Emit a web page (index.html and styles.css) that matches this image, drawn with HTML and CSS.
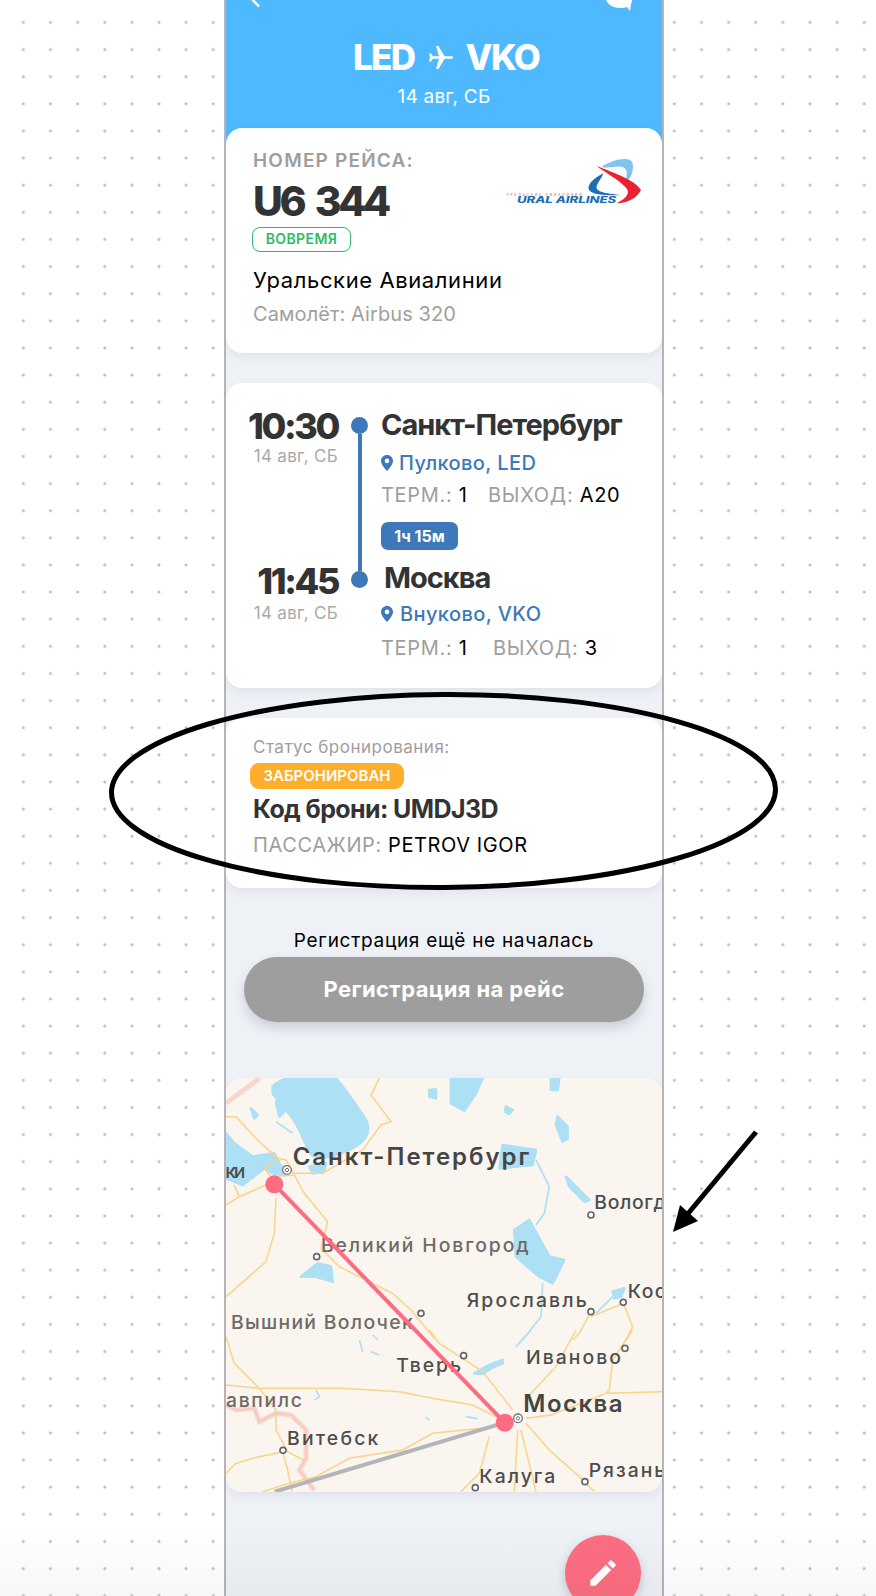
FILE: index.html
```html
<!DOCTYPE html>
<html lang="ru">
<head>
  <meta charset="UTF-8">
  <title>LED - VKO</title>
  <link rel="stylesheet" href="styles.css">
</head>
<body>
<div class="phone">
  <!-- шапка -->
  <div class="head">
    <div class="topbar">
      <svg class="back" width="10" height="8" viewBox="0 0 10 8"><path d="M0 -2L8 6.5" stroke="#fff" stroke-width="2.4" fill="none"/></svg>
      <svg class="chat" width="28" height="12" viewBox="0 0 28 12"><path d="M0 0C2 5 8 8 14 8C16 8 19 8 21 7L24 11L25 4C26 2 26 1 26 0Z" fill="#fff"/></svg>
    </div>
    <div class="route">
      <span>LED</span>
      <svg class="plane" width="25" height="23" viewBox="0 0 25 23"><path d="M25 11.5c0-.8-1-1.3-2-1.3h-6.5L10.5 0H8l3 10.2H5L3 7.5H1l1 4-1 4h2l2-2.7h6L8 23h2.5l6-10.2H23c1 0 2-.5 2-1.3z" fill="#fff"/></svg>
      <span>VKO</span>
    </div>
    <div class="route-date">14 авг, СБ</div>
  </div>

  <!-- рейс -->
  <div class="card flight">
    <div class="flight-info">
      <div class="flight-label">НОМЕР РЕЙСА:</div>
      <div class="flight-no">U6 344</div>
      <div class="on-time">ВОВРЕМЯ</div>
      <div class="airline">Уральские Авиалинии</div>
      <div class="aircraft">Самолёт: Airbus 320</div>
    </div>
    <svg class="logo" width="136" height="50" viewBox="50 15 408 150">
      <path d="M340 50C370 30 425 15 433 40C438 70 420 95 405 108C415 85 422 60 405 52C385 45 355 58 340 50Z" fill="#7fc4ea"/>
      <path d="M345 70C315 85 295 105 302 120C310 135 370 138 395 135C350 130 320 125 325 108C330 95 340 85 345 70Z" fill="#1f6db5"/>
      <path d="M325 48C380 70 440 90 458 120C445 145 420 158 385 160C415 145 428 128 412 112C390 88 350 68 325 48Z" fill="#e8222e"/>
      <text class="logo-ru" x="55" y="137" textLength="225">УРАЛЬСКИЕ АВИАЛИНИИ</text>
      <text class="logo-en" x="86" y="160" textLength="298" lengthAdjust="spacingAndGlyphs">URAL AIRLINES</text>
    </svg>
  </div>

  <!-- маршрут -->
  <div class="card legs">
    <div class="time-a">
      <div class="time">10:30</div>
      <div class="time-date">14 авг, СБ</div>
    </div>
    <div class="rail"><i class="dot"></i><i class="rail-line"></i><i class="dot"></i></div>
    <div class="stop-a">
      <div class="city">Санкт-Петербург</div>
      <div class="airport">
        <svg class="pin" width="12" height="16" viewBox="0 0 12 16"><path d="M6 0C2.7 0 0 2.6 0 5.9C0 10 6 16 6 16S12 10 12 5.9C12 2.6 9.3 0 6 0ZM6 8.2A2.3 2.3 0 1 1 6 3.6A2.3 2.3 0 0 1 6 8.2Z" fill="#3d79b8"/></svg>
        Пулково, LED
      </div>
      <div class="gates"><span class="muted">ТЕРМ.:</span> 1 <span class="muted gate-label">ВЫХОД:</span> A20</div>
      <div class="duration">1ч 15м</div>
    </div>
    <div class="time-b">
      <div class="time">11:45</div>
      <div class="time-date">14 авг, СБ</div>
    </div>
    <div class="stop-b">
      <div class="city city-b">Москва</div>
      <div class="airport airport-b">
        <svg class="pin" width="12" height="16" viewBox="0 0 12 16"><path d="M6 0C2.7 0 0 2.6 0 5.9C0 10 6 16 6 16S12 10 12 5.9C12 2.6 9.3 0 6 0ZM6 8.2A2.3 2.3 0 1 1 6 3.6A2.3 2.3 0 0 1 6 8.2Z" fill="#3d79b8"/></svg>
        Внуково, VKO
      </div>
      <div class="gates gates-b"><span class="muted">ТЕРМ.:</span> 1 <span class="muted gate-label gate-label-b">ВЫХОД:</span> 3</div>
    </div>
  </div>

  <!-- бронь -->
  <div class="card booking">
    <div class="booking-title">Статус бронирования:</div>
    <div class="booked">ЗАБРОНИРОВАН</div>
    <div class="booking-code">Код брони: UMDJ3D</div>
    <div class="passenger"><span class="muted">ПАССАЖИР:</span> PETROV IGOR</div>
  </div>

  <div class="checkin-note">Регистрация ещё не началась</div>
  <div class="checkin-btn">Регистрация на рейс</div>

  <!-- карта -->
  <svg class="map" width="436" height="414" viewBox="0 0 436 414">
    <rect width="436" height="414" fill="#faf5ef"/>

    <!-- верхняя часть, координаты в 3x -->
    <g transform="translate(-10,-8) scale(.3333)">
      <path class="water" d="M170 50C185 35 200 25 225 25H360C385 55 410 90 430 120C450 145 465 170 450 200C430 230 385 250 330 262L290 258C270 235 262 200 245 170C225 130 190 100 170 70Z"/>
      <path class="water" d="M705 25H800L780 70L745 122L705 100Z"/>
      <path class="water" d="M1005 25H1030L1025 60H1005ZM640 60L660 58L660 85L640 80ZM870 110L890 120L880 132L868 125ZM1025 140L1055 170L1055 205L1040 215L1020 165Z"/>
      <path class="water" d="M30 190L55 220L110 260L175 250L195 290L145 295L80 345L30 325Z"/>
      <path class="water" d="M150 295L205 290L205 315L170 310ZM280 290L330 280L325 305L290 310ZM860 225L960 240L950 285L850 295Z"/>
      <path class="water" d="M895 480L940 450L1000 560L1045 570L1010 640L970 620L900 560Z"/>
      <path class="water" d="M255 620L305 580L345 590L350 635L300 620ZM1050 320L1120 390L1105 395L1060 350ZM1190 665L1225 655L1215 680L1195 685ZM105 115L125 135L115 145ZM180 95L205 125L190 140Z"/>
      <path class="river" d="M960 270L1000 350L985 430L960 465M980 640L975 740L920 810M1140 730L1190 680M180 155L230 190"/>
      <path class="border-out" d="M30 100L130 25"/>
      <path class="road" d="M490 25L465 75L525 155L495 165L440 240L320 310L230 310"/>
      <path class="road" d="M30 140L60 140L130 215L185 265L210 270L235 315L265 370L335 455L315 535L370 590L440 625L530 670L585 720L655 805"/>
      <path class="road" d="M185 265L145 295L165 320L235 315M150 345L70 380L30 405M55 345L70 380M180 385L175 490L150 575L30 680"/>
      <path class="road" d="M1125 725L1090 790L1070 810M1125 740L1222 700L1250 770L1230 810"/>
      <circle class="town" cx="1125" cy="435" r="9"/>
      <circle class="town" cx="302" cy="560" r="9"/>
      <circle class="town" cx="615" cy="730" r="9"/>
      <circle class="town" cx="1125" cy="725" r="9"/>
      <circle class="town" cx="1222" cy="697" r="9"/>
      <circle class="capital" cx="213" cy="300" r="13"/>
      <circle class="capital-in" cx="213" cy="300" r="5"/>
      <text class="label-big" x="230" y="284" textLength="710">Санкт-Петербург</text>
      <text class="label" x="28" y="325" textLength="60">ки</text>
      <text class="label" x="1135" y="418" textLength="215">Вологд</text>
      <text class="label-soft" x="315" y="545" textLength="623">Великий Новгород</text>
      <text class="label" x="752" y="710" textLength="360">Ярославль</text>
      <text class="label" x="1235" y="685" textLength="115">Кос</text>
      <text class="label-soft" x="45" y="778" textLength="545">Вышний Волочек</text>
    </g>

    <!-- нижняя часть -->
    <g transform="translate(-10,252) scale(.3333)">
      <path class="river" d="M430 30L440 65M470 15L485 30M465 65L490 75M900 50L945 0M300 180L310 200L295 210M630 262L640 270M750 260L785 266"/>
      <path class="water" d="M775 130L820 105L860 90L860 100L825 115L800 132Z"/>
      <path class="border-out" d="M30 225L60 240L115 235L130 275L180 250L225 255L270 300L270 385L250 420L295 480"/>
      <path class="border-in" d="M30 225L60 240L115 235L130 275L180 250L225 255L270 300L270 385L250 420L295 480"/>
      <path class="road" d="M30 20L55 100L130 175L180 240L180 300L215 365L270 395"/>
      <path class="road" d="M30 165L130 175L380 175L550 185L650 205L770 225L850 265"/>
      <path class="road" d="M640 0L670 40L740 85L800 125L890 240"/>
      <path class="road" d="M1080 0L1020 110L940 195M1250 0L1190 90L1180 180L1170 190L1005 255L930 265M1170 190L1340 185"/>
      <path class="road" d="M840 290L650 310L560 360L400 385L300 440L220 460L140 485"/>
      <path class="road" d="M30 430L60 400L110 385L200 365L215 420L228 485"/>
      <path class="road" d="M820 320L790 430L735 485M905 300L895 485M915 300L960 485M930 280L1000 360L1090 440L1135 485"/>
      <circle class="town" cx="743" cy="77" r="9"/>
      <circle class="town" cx="1227" cy="55" r="9"/>
      <circle class="town" cx="201" cy="361" r="9"/>
      <circle class="town" cx="778" cy="473" r="9"/>
      <circle class="town" cx="1107" cy="455" r="9"/>
      <circle class="capital" cx="906" cy="265" r="13"/>
      <circle class="capital-in" cx="906" cy="265" r="5"/>
      <text class="label" x="541" y="125" textLength="194">Тверь</text>
      <text class="label" x="930" y="103" textLength="285">Иваново</text>
      <text class="label-big" x="922" y="247" textLength="298">Москва</text>
      <text class="label-soft" x="30" y="232" textLength="228">авпилс</text>
      <text class="label" x="213" y="345" textLength="274">Витебск</text>
      <text class="label" x="790" y="458" textLength="228">Калуга</text>
      <text class="label" x="1118" y="440" textLength="230">Рязань</text>
    </g>

    <line class="route-done" x1="278.7" y1="344.7" x2="48.7" y2="413.7"/>
    <line class="route-line" x1="48.3" y1="106.3" x2="278.7" y2="344.7"/>
    <circle class="route-dot" cx="48.3" cy="106.3" r="9"/>
    <circle class="route-dot" cx="278.7" cy="344.7" r="9"/>
  </svg>

  <div class="fab">
    <svg width="34" height="34" viewBox="0 0 24 24"><path d="M3 17.25V21h3.75L17.81 9.94l-3.75-3.75L3 17.25zM20.71 7.04a1 1 0 000-1.41l-2.34-2.34a1 1 0 00-1.41 0l-1.83 1.83 3.75 3.75 1.83-1.83z" fill="#fff"/></svg>
  </div>
</div>

<!-- пометки поверх скриншота -->
<svg class="marks" width="876" height="1596" viewBox="0 0 876 1596">
  <ellipse cx="443.5" cy="791" rx="332" ry="96.5" fill="none" stroke="#000" stroke-width="5" transform="rotate(-.3 443.5 791)"/>
  <line x1="756" y1="1132" x2="686" y2="1216" stroke="#000" stroke-width="5"/>
  <polygon points="673,1232 680,1205 698,1221" fill="#000"/>
</svg>
</body>
</html>
```

FILE: styles.css
```css
* {
  padding: 0;
  margin: 0;
  box-sizing: border-box;
}

html,
body {
  height: 1596px;
  overflow: hidden;
}

body {
  position: relative;
  background-color: #fff;
  background-image: radial-gradient(circle, #bdbdbd 1.3px, transparent 1.7px);
  background-size: 27.13px 27.13px;
  background-position: 9.8px 8.9px;
  font-family: Inter, "Noto Sans", sans-serif;
  color: #000;
}

/* лёгкое затемнение внизу снимка */
body::after {
  content: "";
  position: absolute;
  left: 0;
  right: 0;
  bottom: 0;
  height: 70px;
  background: linear-gradient(rgba(0, 0, 0, 0), rgba(0, 0, 0, .03));
  pointer-events: none;
}

.phone {
  position: relative;
  width: 440px;
  height: 1596px;
  margin-left: 224px;
  border-left: 2px solid #b8b3b8;
  border-right: 2px solid #b8b3b8;
  background: #eef1f6;
  overflow: hidden;
}

.head {
  height: 150px;
  background: #4fb9ff;
  color: #fff;
  text-align: center;
}

.topbar {
  display: flex;
  justify-content: space-between;
  height: 36px;
  padding: 0 28px 0 25px;
}

.route {
  display: flex;
  justify-content: center;
  align-items: center;
  gap: 13px;
  height: 42px;
  margin-left: 4px;
  font-size: 35px;
  font-weight: 800;
  letter-spacing: -1.6px;
}

.route-date {
  margin-top: 7px;
  font-size: 19px;
  line-height: 24px;
  letter-spacing: .2px;
}

.card {
  background: #fff;
  border-radius: 16px;
  box-shadow: 0 4px 10px rgba(60, 70, 90, .08);
}

/* рейс */
.flight {
  display: flex;
  justify-content: space-between;
  margin-top: -22px;
  height: 225px;
  padding: 23px 21px 0 27px;
  position: relative;
}

.flight-label {
  font-size: 19px;
  line-height: 20px;
  font-weight: 600;
  letter-spacing: 1.2px;
  color: #9e9e9e;
}

.flight-no {
  margin-top: 8px;
  font-size: 41px;
  line-height: 44px;
  font-weight: 800;
  letter-spacing: -3.4px;
  word-spacing: 6px;
  color: #333;
}

.on-time {
  width: 99px;
  height: 25px;
  margin-top: 4px;
  margin-left: -1px;
  border: 1.5px solid #2dbb6a;
  border-radius: 8px;
  color: #2dbb6a;
  font-size: 14px;
  line-height: 22px;
  font-weight: 600;
  text-align: center;
  letter-spacing: .4px;
}

.airline {
  margin-top: 14px;
  font-size: 22px;
  line-height: 28px;
  letter-spacing: .6px;
}

.aircraft {
  margin-top: 7px;
  font-size: 20px;
  line-height: 26px;
  letter-spacing: .1px;
  color: #a0a0a0;
}

.logo {
  margin-top: 4px;
}

.logo-ru {
  font-size: 9px;
  fill: #d9434c;
}

.logo-en {
  font-size: 26px;
  font-weight: 800;
  font-style: italic;
  fill: #1f6db5;
}

/* маршрут */
.legs {
  display: grid;
  grid-template-columns: 112px 43px 1fr;
  grid-template-rows: auto auto;
  align-content: start;
  margin-top: 30px;
  height: 305px;
  padding-top: 24px;
}

.time-a,
.time-b {
  grid-column: 1;
  text-align: right;
}

.time-b {
  padding-top: 12px;
}

.time {
  font-size: 36px;
  line-height: 38px;
  font-weight: 800;
  letter-spacing: -2.4px;
  color: #333;
}

.time-date {
  font-size: 17px;
  line-height: 22px;
  letter-spacing: .3px;
  color: #aaa;
}

.time-b .time-date {
  margin-top: 2px;
}

.rail {
  grid-column: 2;
  grid-row: 1 / 3;
  display: flex;
  flex-direction: column;
  align-items: center;
  padding: 10px 0 73px;
}

.dot {
  flex: none;
  width: 17px;
  height: 17px;
  border-radius: 50%;
  background: #3d79b8;
}

.rail-line {
  flex: 1;
  width: 4px;
  background: #3d79b8;
}

.stop-a,
.stop-b {
  grid-column: 3;
}

.stop-b {
  padding-top: 10px;
}

.city {
  font-size: 29px;
  line-height: 36px;
  font-weight: 700;
  letter-spacing: -1px;
  color: #333;
}

.city-b {
  margin-left: 3px;
}

.airport {
  display: flex;
  align-items: center;
  gap: 6px;
  margin-top: 7px;
  font-size: 20px;
  line-height: 26px;
  font-weight: 500;
  letter-spacing: .4px;
  color: #3d79b8;
}

.airport-b {
  gap: 7px;
  margin-top: 5px;
}

.gates {
  margin-top: 6px;
  font-size: 20px;
  line-height: 26px;
  letter-spacing: .7px;
}

.gates-b {
  margin-top: 8px;
}

.muted {
  color: #9e9e9e;
}

.gate-label {
  margin-left: 14px;
}

.gate-label-b {
  margin-left: 19px;
}

.duration {
  width: 77px;
  height: 28px;
  margin-top: 14px;
  border-radius: 7px;
  background: #3d79b8;
  color: #fff;
  font-size: 16px;
  line-height: 28px;
  font-weight: 700;
  text-align: center;
}

/* бронь */
.booking {
  height: 170px;
  margin-top: 30px;
  padding: 18px 27px 0;
}

.booking-title {
  font-size: 17px;
  line-height: 22px;
  letter-spacing: .5px;
  color: #9e9e9e;
}

.booked {
  width: 154px;
  height: 26px;
  margin-top: 5px;
  margin-left: -3px;
  border-radius: 9px;
  background: #ffae2b;
  color: #fff;
  font-size: 15px;
  line-height: 26px;
  font-weight: 600;
  text-align: center;
}

.booking-code {
  margin-top: 5px;
  font-size: 25px;
  line-height: 30px;
  font-weight: 700;
  letter-spacing: -.6px;
  color: #333;
}

.passenger {
  margin-top: 8px;
  font-size: 20px;
  line-height: 26px;
  letter-spacing: .6px;
}

.checkin-note {
  margin-top: 41px;
  font-size: 19px;
  line-height: 24px;
  letter-spacing: .7px;
  text-align: center;
}

.checkin-btn {
  height: 65px;
  margin: 4px 18px 0;
  border-radius: 33px;
  background: #9e9e9e;
  color: #fff;
  font-size: 22px;
  line-height: 65px;
  font-weight: 700;
  letter-spacing: .4px;
  text-align: center;
  box-shadow: 0 6px 12px rgba(60, 70, 90, .2);
}

/* карта */
.map {
  display: block;
  margin-top: 56px;
  border-radius: 16px;
  box-shadow: 0 4px 10px rgba(60, 70, 90, .08);
}

.water {
  fill: #ade0f4;
  stroke: #ade0f4;
  stroke-width: 8;
  stroke-linejoin: round;
}

.river {
  fill: none;
  stroke: #ade0f4;
  stroke-width: 5;
}

.road {
  fill: none;
  stroke: #f9d388;
  stroke-width: 4.5;
}

.border-out {
  fill: none;
  stroke: #f8d6cd;
  stroke-width: 15;
}

.border-in {
  fill: none;
  stroke: #ebbdb2;
  stroke-width: 2;
}

.town {
  fill: #fff;
  stroke: #666;
  stroke-width: 5;
}

.capital {
  fill: #fff;
  stroke: #777;
  stroke-width: 4;
}

.capital-in {
  fill: none;
  stroke: #777;
  stroke-width: 3;
}

.label,
.label-soft,
.label-big {
  font-family: Inter, "Noto Sans", sans-serif;
  font-size: 58px;
  font-weight: 500;
  fill: #4d4d4d;
}

.label-soft {
  fill: #6e6a66;
}

.label-big {
  font-size: 72px;
  font-weight: 600;
  fill: #454545;
}

.route-line {
  stroke: #ff6b81;
  stroke-width: 4;
}

.route-done {
  stroke: #b3b5b8;
  stroke-width: 4;
}

.route-dot {
  fill: #ff6b81;
}

.fab {
  position: absolute;
  top: 1535px;
  right: 21px;
  display: flex;
  align-items: center;
  justify-content: center;
  width: 76px;
  height: 76px;
  border-radius: 50%;
  background: #fd6d82;
  box-shadow: 0 4px 10px rgba(60, 70, 90, .25);
}

.marks {
  position: absolute;
  left: 0;
  top: 0;
  pointer-events: none;
}
```
